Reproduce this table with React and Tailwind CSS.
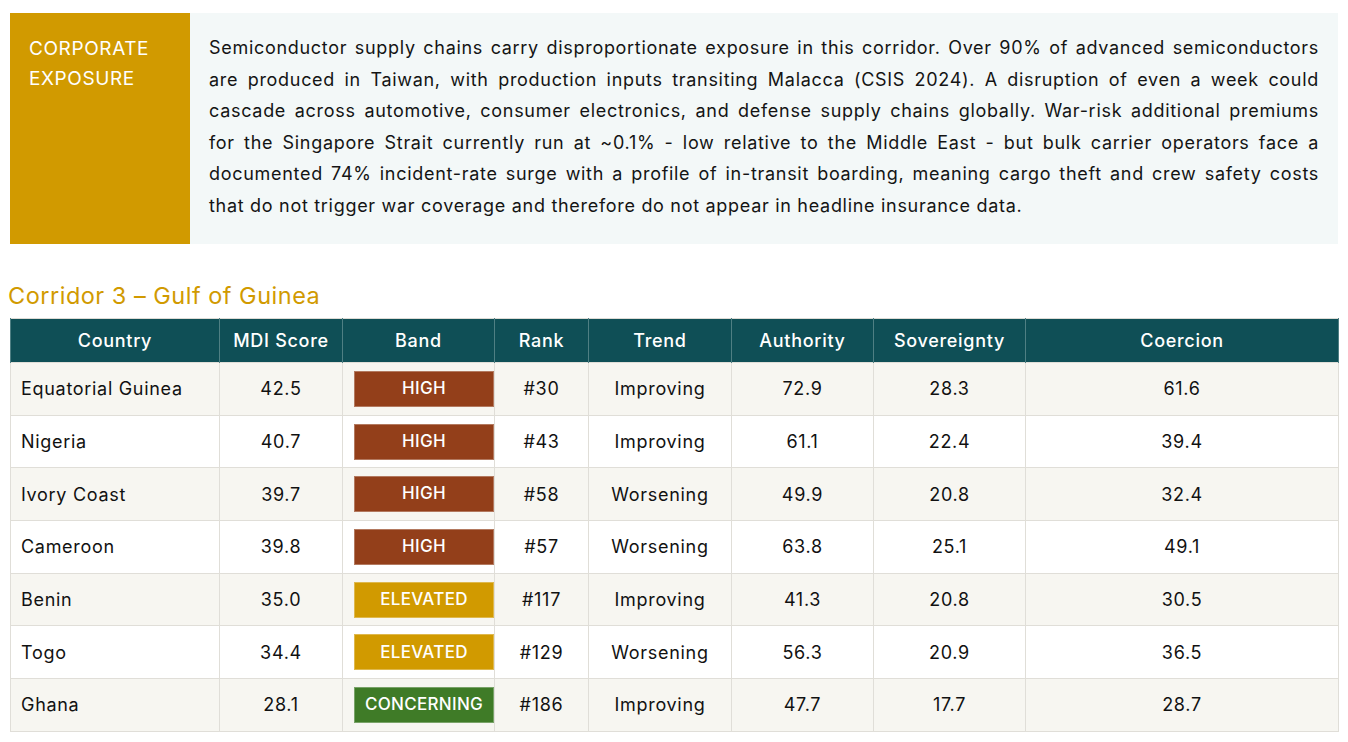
import React from 'react'

const rows = [
  { country: 'Equatorial Guinea', score: '42.5', band: 'HIGH', rank: '#30', trend: 'Improving', authority: '72.9', sovereignty: '28.3', coercion: '61.6' },
  { country: 'Nigeria', score: '40.7', band: 'HIGH', rank: '#43', trend: 'Improving', authority: '61.1', sovereignty: '22.4', coercion: '39.4' },
  { country: 'Ivory Coast', score: '39.7', band: 'HIGH', rank: '#58', trend: 'Worsening', authority: '49.9', sovereignty: '20.8', coercion: '32.4' },
  { country: 'Cameroon', score: '39.8', band: 'HIGH', rank: '#57', trend: 'Worsening', authority: '63.8', sovereignty: '25.1', coercion: '49.1' },
  { country: 'Benin', score: '35.0', band: 'ELEVATED', rank: '#117', trend: 'Improving', authority: '41.3', sovereignty: '20.8', coercion: '30.5' },
  { country: 'Togo', score: '34.4', band: 'ELEVATED', rank: '#129', trend: 'Worsening', authority: '56.3', sovereignty: '20.9', coercion: '36.5' },
  { country: 'Ghana', score: '28.1', band: 'CONCERNING', rank: '#186', trend: 'Improving', authority: '47.7', sovereignty: '17.7', coercion: '28.7' },
]

const bandColors = {
  HIGH: 'bg-[#933f1a]',
  ELEVATED: 'bg-[#d19a00]',
  CONCERNING: 'bg-[#3f7b27]',
}

const headers = ['Country', 'MDI Score', 'Band', 'Rank', 'Trend', 'Authority', 'Sovereignty', 'Coercion']

// paragraph lines as they break in the layout
const lines = [
  'Semiconductor supply chains carry disproportionate exposure in this corridor. Over 90% of advanced semiconductors',
  'are produced in Taiwan, with production inputs transiting Malacca (CSIS 2024). A disruption of even a week could',
  'cascade across automotive, consumer electronics, and defense supply chains globally. War-risk additional premiums',
  'for the Singapore Strait currently run at ~0.1% - low relative to the Middle East - but bulk carrier operators face a',
  'documented 74% incident-rate surge with a profile of in-transit boarding, meaning cargo theft and crew safety costs',
]

const App = () => {
  return (
    <div className="bg-white min-h-screen pt-[13px] px-[10px] font-['Inter',sans-serif] text-[#111]">
      {/* callout */}
      <div className="flex bg-[#f3f8f8] h-[231px]">
        <div className="w-[180px] shrink-0 bg-[#d19a00] text-white text-[19px] tracking-[0.6px] leading-[30px] uppercase px-[19px] pt-[21px]">
          Corporate Exposure
        </div>
        <div className="flex-1 pl-[19px] pr-[19px] pt-[19px] text-[18px] tracking-[0.7px] leading-[31.6px] text-[#141414]">
          {lines.map((l) => (
            <div key={l} className="text-justify [text-align-last:justify]">{l}</div>
          ))}
          <div>that do not trigger war coverage and therefore do not appear in headline insurance data.</div>
        </div>
      </div>

      <h2 className="text-[23.5px] tracking-[0.5px] leading-[28px] text-[#d19a00] mt-[38px] -ml-[2px]">Corridor 3 – Gulf of Guinea</h2>

      <table className="table-fixed border-collapse w-[1328px] mt-[8px] text-[18px] tracking-[0.7px] border border-[#dddbd5]">
        <colgroup>
          <col className="w-[209px]" />
          <col className="w-[123px]" />
          <col className="w-[152px]" />
          <col className="w-[94px]" />
          <col className="w-[143px]" />
          <col className="w-[142px]" />
          <col className="w-[152px]" />
          <col className="w-[313px]" />
        </colgroup>
        <thead>
          <tr className="bg-[#0f4f56] text-white h-[44px]">
            {headers.map((h) => (
              <th key={h} className="font-medium text-center border-x border-[#4f7f83] px-[11px]">
                {h}
              </th>
            ))}
          </tr>
        </thead>
        <tbody>
          {rows.map((r, i) => (
            <tr key={r.country} className={`h-[52.7px] ${i % 2 === 0 ? 'bg-[#f7f6f1]' : 'bg-white'}`}>
              <td className="border border-[#e0ded8] pl-[10px] text-left">{r.country}</td>
              <td className="border border-[#e0ded8] text-center">{r.score}</td>
              <td className="border border-[#e0ded8] pl-[11px] pr-0">
                <div className={`${bandColors[r.band]} h-[36px] flex items-center justify-center text-white text-[17px] tracking-[0.3px] font-medium border border-white/30`}>
                  {r.band}
                </div>
              </td>
              <td className="border border-[#e0ded8] text-center">{r.rank}</td>
              <td className="border border-[#e0ded8] text-center">{r.trend}</td>
              <td className="border border-[#e0ded8] text-center">{r.authority}</td>
              <td className="border border-[#e0ded8] text-center">{r.sovereignty}</td>
              <td className="border border-[#e0ded8] text-center">{r.coercion}</td>
            </tr>
          ))}
        </tbody>
      </table>
    </div>
  )
}

export default App
